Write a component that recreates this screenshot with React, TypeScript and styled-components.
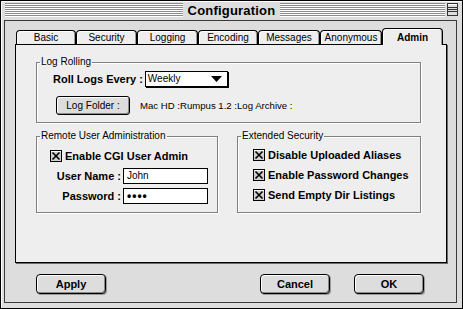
import React from "react";
import styled, { createGlobalStyle } from "styled-components";

const Global = createGlobalStyle`
  html, body { margin: 0; padding: 0; background: #ffffff; }
  body { font-family: "Liberation Sans", Arial, sans-serif; color: #000; }
  * { box-sizing: border-box; }
`;

const Window = styled.div`
  width: 463px;
  height: 309px;
  border: 1px solid #000;
  background: #dddddd;
  display: flex;
  flex-direction: column;
  box-shadow: inset 1px 1px 0 #ffffff;
`;

const TitleBar = styled.div`
  height: 19px;
  padding: 2px 4px 0 4px;
  display: grid;
  grid-template-columns: 1fr auto 1fr;
  align-items: start;
`;

const Stripes = styled.div`
  height: 14px;
  flex: 1;
  background: repeating-linear-gradient(
    to bottom,
    #8c8c8c 0px,
    #8c8c8c 1px,
    #ffffff 1px,
    #ffffff 2px
  );
`;

const TitleRight = styled.div`
  display: flex;
  align-items: flex-start;
  gap: 2px;
`;

const TitleText = styled.div`
  font: bold 13px/15px "Liberation Sans", Arial, sans-serif;
  padding: 0 5px;
  letter-spacing: 0.2px;
`;

const FrameBody = styled.div`
  flex: 1;
  display: flex;
  padding: 0 5px 5px 3px;
`;

const Content = styled.div`
  flex: 1;
  border: 1px solid #3a3a3a;
  display: flex;
  flex-direction: column;
  padding: 7px 0 0 10px;
`;

const TabRow = styled.div`
  height: 16px;
  display: flex;
  align-items: flex-end;
  padding-left: 1px;
`;

const Tab = styled.div<{ $w: number; $active?: boolean }>`
  width: ${(p) => p.$w}px;
  height: ${(p) => (p.$active ? 17 : 14)}px;
  margin-bottom: ${(p) => (p.$active ? -1 : 0)}px;
  position: relative;
  z-index: ${(p) => (p.$active ? 1 : 0)};
  border: 1px solid #000;
  border-bottom: none;
  border-radius: 4px 4px 0 0;
  background: #eeeeee;
  box-shadow: inset 1px 1px 0 #ffffff, inset -1px 0 0 #9a9a9a;
  display: flex;
  align-items: center;
  justify-content: center;
  font: ${(p) => (p.$active ? "bold " : "")}10px/12px "Liberation Sans", Arial, sans-serif;
  padding-top: ${(p) => (p.$active ? 1 : 0)}px;
`;

const Panel = styled.div`
  width: 432px;
  height: 219px;
  border: 1px solid #000;
  background: #eeeeee;
  box-shadow: 1px 1px 0 #6a6a6a;
  display: flex;
  flex-direction: column;
  gap: 7px;
  padding: 11px 0 0 20px;
`;

const Group = styled.fieldset<{ $w: number; $h: number }>`
  width: ${(p) => p.$w}px;
  height: ${(p) => p.$h}px;
  margin: 0;
  padding: 0;
  border: 1px solid #808080;
  box-shadow: 1px 1px 0 #ffffff, inset 1px 1px 0 #ffffff;
  min-width: 0;
`;

const Legend = styled.legend`
  font: 10px/12px "Liberation Sans", Arial, sans-serif;
  padding: 0 1px;
  margin-left: 3px;
`;

const GroupBody = styled.div<{ $pt: number; $pl: number; $gap: number }>`
  display: flex;
  flex-direction: column;
  padding: ${(p) => p.$pt}px 0 0 ${(p) => p.$pl}px;
  gap: ${(p) => p.$gap}px;
`;

const Row = styled.div<{ $indent?: number }>`
  display: flex;
  align-items: center;
  margin-left: ${(p) => p.$indent ?? 0}px;
`;

const BoldLabel = styled.span<{ $w?: number }>`
  font: bold 11px/14px "Liberation Sans", Arial, sans-serif;
  ${(p) => (p.$w ? `width: ${p.$w}px; text-align: right;` : "")}
  padding-right: 2px;
  white-space: nowrap;
`;

const PlainText = styled.span`
  font: 9.6px/12px "Liberation Sans", Arial, sans-serif;
  white-space: nowrap;
`;

const Popup = styled.div`
  width: 83px;
  height: 16px;
  border: 1px solid #000;
  background: #fff;
  box-shadow: 1px 1px 0 #000;
  display: flex;
  align-items: center;
  justify-content: space-between;
  padding: 0 5px 0 2px;
  font: 10px/12px "Liberation Sans", Arial, sans-serif;
`;

const SmallButton = styled.div`
  width: 74px;
  height: 19px;
  border: 1px solid #000;
  border-radius: 3px;
  background: #dddddd;
  box-shadow: inset 1px 1px 0 #ffffff, inset -1px -1px 0 #8a8a8a;
  display: flex;
  align-items: center;
  justify-content: center;
  font: 10px/12px "Liberation Sans", Arial, sans-serif;
  margin-right: 10px;
`;

const Field = styled.div`
  width: 85px;
  height: 16px;
  border: 1px solid #000;
  background: #fff;
  display: flex;
  align-items: center;
  padding-left: 3px;
  font: 10px/12px "Liberation Sans", Arial, sans-serif;
`;

const Dots = styled.span`
  font: bold 12px/12px "Liberation Sans", Arial, sans-serif;
  letter-spacing: 1px;
`;

const CheckRow = styled.div<{ $mb?: number }>`
  display: flex;
  align-items: center;
  gap: 3px;
  height: 13px;
  margin-bottom: ${(p) => p.$mb ?? 0}px;
`;

const BottomRow = styled.div`
  display: flex;
  gap: 19px;
`;

const ButtonRow = styled.div`
  display: flex;
  margin-top: 11px;
  padding-left: 21px;
`;

const PushButton = styled.div<{ $ml?: number }>`
  width: 70px;
  height: 20px;
  margin-left: ${(p) => p.$ml ?? 0}px;
  border: 1px solid #000;
  border-radius: 4px;
  background: #dddddd;
  box-shadow: inset 1px 1px 0 #ffffff, inset -1px -1px 0 #8a8a8a, 1px 1px 0 #9a9a9a;
  display: flex;
  align-items: center;
  justify-content: center;
  font: bold 11px/13px "Liberation Sans", Arial, sans-serif;
`;

const CollapseBox = () => (
  <svg width="11" height="13" viewBox="0 0 11 13" style={{ display: "block" }}>
    <rect x="0.5" y="0.5" width="10" height="12" fill="#dddddd" stroke="#333" />
    <line x1="1" y1="1.5" x2="10" y2="1.5" stroke="#fff" />
    <line x1="1" y1="4.5" x2="10" y2="4.5" stroke="#333" />
    <line x1="1" y1="6.5" x2="10" y2="6.5" stroke="#333" />
    <line x1="1" y1="8.5" x2="10" y2="8.5" stroke="#333" />
  </svg>
);

const Triangle = () => (
  <svg width="11" height="6" viewBox="0 0 11 6" style={{ display: "block" }}>
    <polygon points="0,0 11,0 5.5,6" fill="#000" />
  </svg>
);

const CheckBox = () => (
  <svg width="12" height="12" viewBox="0 0 12 12" style={{ display: "block" }}>
    <rect x="0.5" y="0.5" width="11" height="11" fill="#cfcfcf" stroke="#000" />
    <line x1="1" y1="1.5" x2="11" y2="1.5" stroke="#fff" />
    <path d="M2.5 2.5 L9.5 9.5 M9.5 2.5 L2.5 9.5" stroke="#000" strokeWidth="1.6" />
  </svg>
);

const tabs: { label: string; w: number; active?: boolean }[] = [
  { label: "Basic", w: 60 },
  { label: "Security", w: 61 },
  { label: "Logging", w: 61 },
  { label: "Encoding", w: 60 },
  { label: "Messages", w: 62 },
  { label: "Anonymous", w: 62 },
  { label: "Admin", w: 61, active: true },
];

const Check = ({ label, mb }: { label: string; mb?: number }) => (
  <CheckRow $mb={mb}>
    <CheckBox />
    <BoldLabel>{label}</BoldLabel>
  </CheckRow>
);

export default function App() {
  return (
    <>
      <Global />
      <Window>
        <TitleBar>
          <Stripes />
          <TitleText>Configuration</TitleText>
          <TitleRight>
            <Stripes />
            <CollapseBox />
          </TitleRight>
        </TitleBar>
        <FrameBody>
          <Content>
            <TabRow>
              {tabs.map((t) => (
                <Tab key={t.label} $w={t.w} $active={t.active}>
                  {t.label}
                </Tab>
              ))}
            </TabRow>
            <Panel>
              <Group $w={385} $h={67}>
                <Legend>Log Rolling</Legend>
                <GroupBody $pt={3} $pl={16} $gap={9}>
                  <Row>
                    <BoldLabel>Roll Logs Every :</BoldLabel>
                    <Popup>
                      <span>Weekly</span>
                      <Triangle />
                    </Popup>
                  </Row>
                  <Row $indent={3}>
                    <SmallButton>Log Folder :</SmallButton>
                    <PlainText>Mac HD :Rumpus 1.2 :Log Archive :</PlainText>
                  </Row>
                </GroupBody>
              </Group>
              <BottomRow>
                <Group $w={182} $h={83}>
                  <Legend>Remote User Administration</Legend>
                  <GroupBody $pt={7} $pl={13} $gap={4}>
                    <Check label="Enable CGI User Admin" mb={2} />
                    <Row $indent={-13}>
                      <BoldLabel $w={86}>User Name :</BoldLabel>
                      <Field>John</Field>
                    </Row>
                    <Row $indent={-13}>
                      <BoldLabel $w={86}>Password :</BoldLabel>
                      <Field>
                        <Dots>••••</Dots>
                      </Field>
                    </Row>
                  </GroupBody>
                </Group>
                <Group $w={184} $h={83}>
                  <Legend>Extended Security</Legend>
                  <GroupBody $pt={6} $pl={15} $gap={7}>
                    <Check label="Disable Uploaded Aliases" />
                    <Check label="Enable Password Changes" />
                    <Check label="Send Empty Dir Listings" />
                  </GroupBody>
                </Group>
              </BottomRow>
            </Panel>
            <ButtonRow>
              <PushButton>Apply</PushButton>
              <PushButton $ml={154}>Cancel</PushButton>
              <PushButton $ml={24}>OK</PushButton>
            </ButtonRow>
          </Content>
        </FrameBody>
      </Window>
    </>
  );
}
